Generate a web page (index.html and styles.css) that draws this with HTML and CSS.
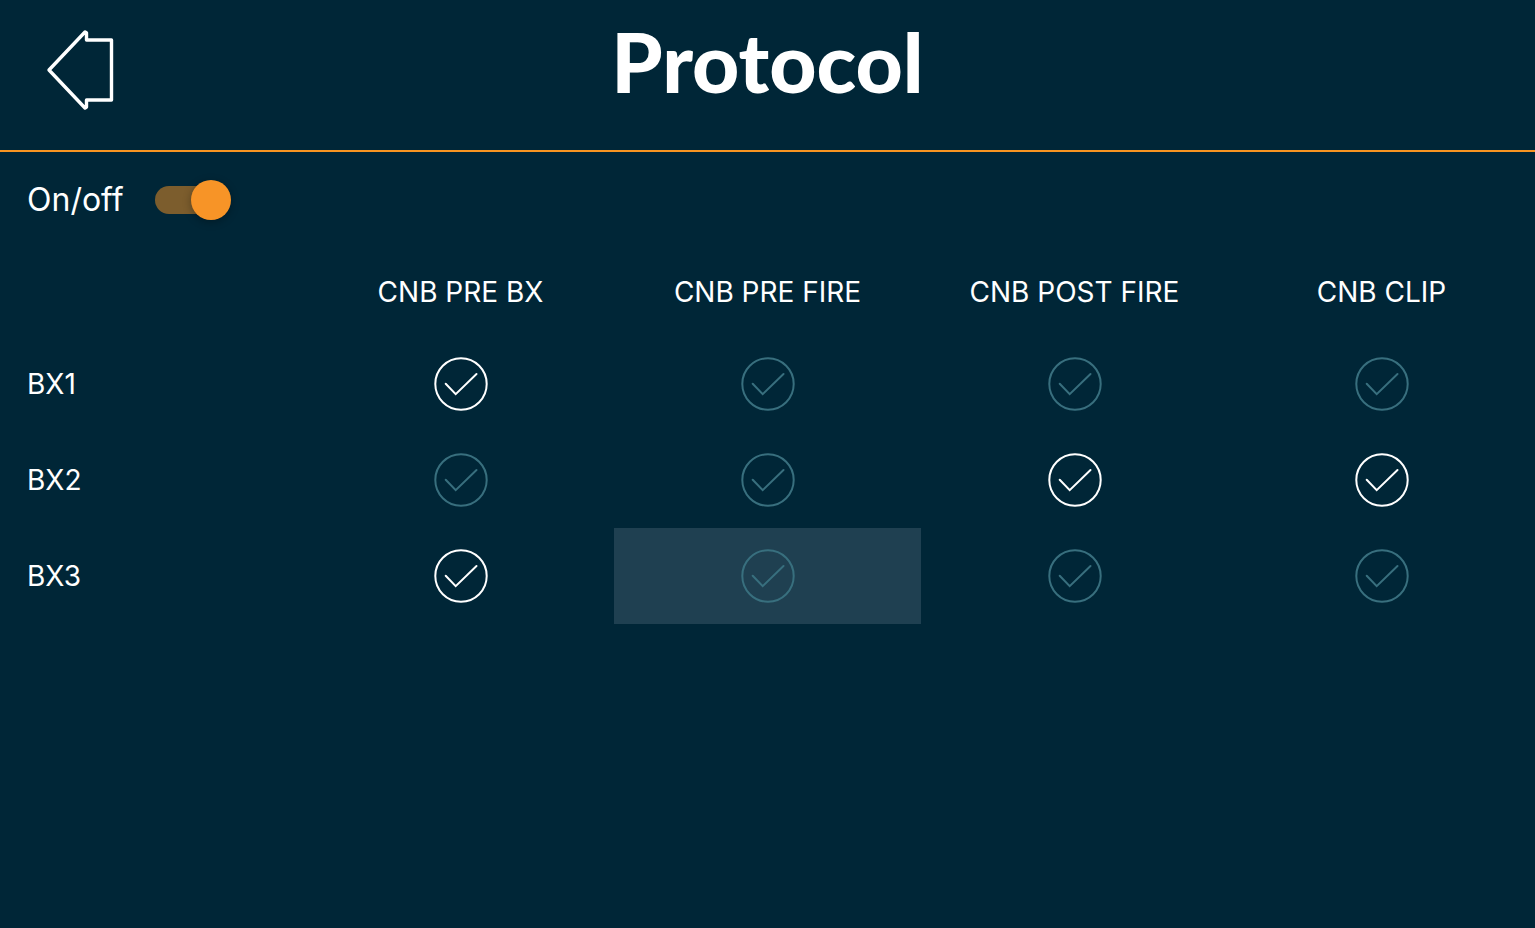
FILE: index.html
```html
<!DOCTYPE html>
<html lang="en">
<head>
<meta charset="utf-8">
<meta name="viewport" content="width=device-width, initial-scale=1">
<title>Protocol</title>
<link rel="stylesheet" href="styles.css">
</head>
<body>
<svg class="sprite" aria-hidden="true">
  <symbol id="tick" viewBox="0 0 54 54">
    <circle cx="27" cy="27" r="25.700"/>
    <path d="M11.700 26.700 21.700 37.200 42.500 17"/>
  </symbol>
</svg>
<header class="header">
  <button class="back" type="button" aria-label="Back">
    <svg class="back-icon" viewBox="0 0 70 82" aria-hidden="true">
      <path d="M3 41 39 3 40.500 4V11H65.500V71H40.500V78L39 79Z"/>
    </svg>
  </button>
  <h1 class="title">Protocol</h1>
</header>
<main>
  <div class="toggle-row">
    <label for="power">On/off</label>
    <input class="switch" id="power" type="checkbox" role="switch" checked>
  </div>
  <table class="grid">
    <thead>
      <tr><td></td><th scope="col">CNB PRE BX</th><th scope="col">CNB PRE FIRE</th><th scope="col">CNB POST FIRE</th><th scope="col">CNB CLIP</th></tr>
    </thead>
    <tbody>
      <tr>
        <th scope="row">BX1</th>
        <td><label class="cell"><input type="checkbox" aria-label="BX1 CNB PRE BX" checked><svg><use href="#tick"/></svg></label></td>
        <td><label class="cell"><input type="checkbox" aria-label="BX1 CNB PRE FIRE"><svg><use href="#tick"/></svg></label></td>
        <td><label class="cell"><input type="checkbox" aria-label="BX1 CNB POST FIRE"><svg><use href="#tick"/></svg></label></td>
        <td><label class="cell"><input type="checkbox" aria-label="BX1 CNB CLIP"><svg><use href="#tick"/></svg></label></td>
      </tr>
      <tr>
        <th scope="row">BX2</th>
        <td><label class="cell"><input type="checkbox" aria-label="BX2 CNB PRE BX"><svg><use href="#tick"/></svg></label></td>
        <td><label class="cell"><input type="checkbox" aria-label="BX2 CNB PRE FIRE"><svg><use href="#tick"/></svg></label></td>
        <td><label class="cell"><input type="checkbox" aria-label="BX2 CNB POST FIRE" checked><svg><use href="#tick"/></svg></label></td>
        <td><label class="cell"><input type="checkbox" aria-label="BX2 CNB CLIP" checked><svg><use href="#tick"/></svg></label></td>
      </tr>
      <tr>
        <th scope="row">BX3</th>
        <td><label class="cell"><input type="checkbox" aria-label="BX3 CNB PRE BX" checked><svg><use href="#tick"/></svg></label></td>
        <td><label class="cell active"><input type="checkbox" aria-label="BX3 CNB PRE FIRE"><svg><use href="#tick"/></svg></label></td>
        <td><label class="cell"><input type="checkbox" aria-label="BX3 CNB POST FIRE"><svg><use href="#tick"/></svg></label></td>
        <td><label class="cell"><input type="checkbox" aria-label="BX3 CNB CLIP"><svg><use href="#tick"/></svg></label></td>
      </tr>
    </tbody>
  </table>
</main>
</body>
</html>
```
FILE: styles.css
```css
* {
  box-sizing: border-box;
}

body {
  margin: 0;
  min-height: 100vh;
  background: #002637;
  color: #fff;
  font: 400 28px/32px Inter, "Liberation Sans", sans-serif;
  font-feature-settings: "calt" 0;
}

.sprite {
  display: none;
}

.header {
  display: grid;
  grid-template-columns: 1fr auto 1fr;
  align-items: start;
  height: 152px;
  border-bottom: 2px solid #f79421;
}

.back {
  justify-self: start;
  margin: 29px 0 0 46px;
  padding: 0;
  border: 0;
  background: none;
  color: inherit;
  cursor: pointer;
}

.back-icon {
  display: block;
  width: 70px;
  height: 82px;
  fill: none;
  stroke: currentColor;
  stroke-width: 3.4;
  stroke-linejoin: round;
}

.title {
  margin: 13px 0 0;
  font: 900 82px/96px Lato, "Open Sans", sans-serif;
}

.toggle-row {
  display: flex;
  align-items: center;
  gap: 31px;
  height: 96px;
  padding-left: 27px;
  font-size: 32px;
}

.switch {
  display: flex;
  align-items: center;
  justify-content: flex-start;
  appearance: none;
  width: 72px;
  height: 28px;
  margin: 0;
  border-radius: 14px;
  background: #3d5563;
  cursor: pointer;
}

.switch::before {
  content: "";
  flex: none;
  width: 40px;
  height: 40px;
  border-radius: 50%;
  background: #ccc;
  box-shadow: 0 2px 8px rgba(0, 0, 0, 0.3);
}

.switch:checked {
  justify-content: flex-end;
  background: #7c5d2d;
}

.switch:checked::before {
  margin-right: -4px;
  background: #f79427;
}

.grid {
  width: 100%;
  table-layout: fixed;
  border-collapse: collapse;
}

.grid th,
.grid td {
  padding: 0;
  font-weight: 400;
}

.grid thead tr {
  height: 88px;
}

.grid tbody tr {
  height: 96px;
}

.grid tbody th {
  padding-left: 27px;
  text-align: left;
}

.cell {
  display: grid;
  place-items: center;
  height: 96px;
  cursor: pointer;
}

.active {
  background: #1f4051;
}

.cell input,
.cell svg {
  grid-area: 1 / 1;
  width: 54px;
  height: 54px;
  margin: 0;
}

.cell input {
  appearance: none;
  border-radius: 50%;
}

.cell svg {
  fill: none;
  stroke: #386f7e;
  stroke-width: 2;
  stroke-linecap: round;
  pointer-events: none;
}

.cell input:checked + svg {
  stroke: #fff;
}
```
